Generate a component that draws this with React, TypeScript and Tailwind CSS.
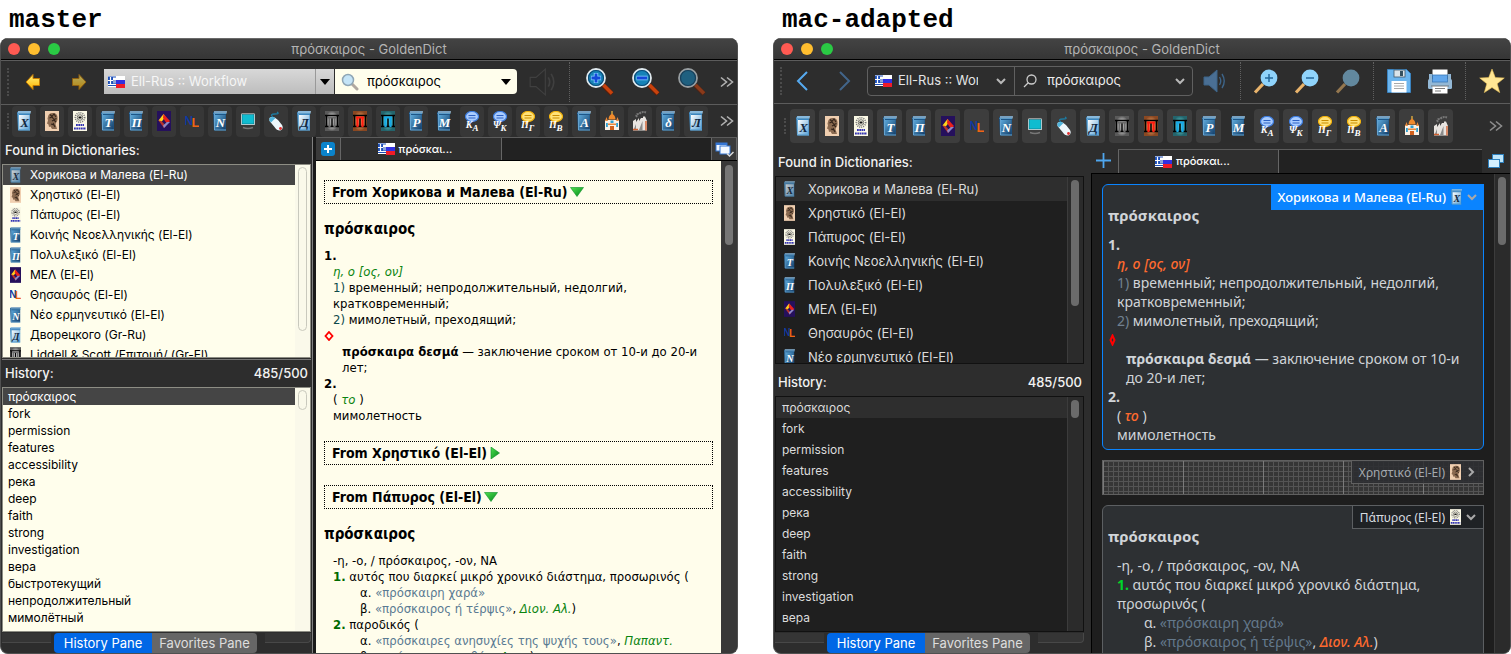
import type { ReactNode } from "react";

/* ---------- Small drawings ---------- */

type GlyphName =
  | "bookX" | "face" | "papyros" | "bookT" | "bookPi" | "mel" | "nl" | "bookN" | "monitor" | "mouse"
  | "bookD" | "colGrey" | "colRed" | "colCyan" | "bookP" | "bookM" | "ka" | "psk" | "pg" | "pb"
  | "bookA" | "church" | "factory" | "bookDelta" | "bookL";

function Defs() {
  return (
    <svg className="absolute size-0" aria-hidden="true">
      <defs>
        <linearGradient id="bookDark" x1="0" y1="0" x2="1" y2="1">
          <stop offset="0" stopColor="#5aa6d8" />
          <stop offset="1" stopColor="#153f69" />
        </linearGradient>
        <linearGradient id="bookLight" x1="0" y1="0" x2="1" y2="1">
          <stop offset="0" stopColor="#ffffff" />
          <stop offset="1" stopColor="#5ba2d6" />
        </linearGradient>
        <radialGradient id="glowGrey"><stop offset="0.2" stopColor="#fff" /><stop offset="1" stopColor="#5a5a5a" /></radialGradient>
        <radialGradient id="glowRed"><stop offset="0.2" stopColor="#ffb070" /><stop offset="1" stopColor="#8a4822" /></radialGradient>
        <radialGradient id="glowCyan"><stop offset="0.2" stopColor="#60e0e0" /><stop offset="1" stopColor="#24646c" /></radialGradient>
        <linearGradient id="gold" x1="0" y1="0" x2="0" y2="1">
          <stop offset="0" stopColor="#fff27a" />
          <stop offset="1" stopColor="#ffb300" />
        </linearGradient>
        <linearGradient id="green" x1="0" y1="0" x2="1" y2="1">
          <stop offset="0" stopColor="#4fe04f" />
          <stop offset="1" stopColor="#05861c" />
        </linearGradient>
      </defs>
    </svg>
  );
}

function Book({ letter, light, dark }: { letter: string; light?: boolean; dark?: boolean }) {
  return (
    <g>
      <path d="M0 1.500 1.500 0H14L13 1.500V19.500H1Z" fill={light ? "#3c86bf" : "#1d5688"} />
      <path d="M1 1h13" stroke="#d4ecfa" strokeWidth="1" />
      <path d="M.5 2.500h13" stroke="#5c9cc8" strokeWidth="1" />
      <rect x="2" y="4" width="10.500" height="14.500" fill={light ? "url(#bookLight)" : "url(#bookDark)"} />
      <path d="M1.500 3v16h11.500" stroke="#77b6e0" fill="none" strokeWidth=".8" />
      <text x="7.500" y="16" textAnchor="middle" fontFamily="Liberation Serif, serif" fontStyle="italic" fontWeight="700" fontSize="13" fill={dark ? "#12283f" : "#fff"}>{letter}</text>
    </g>
  );
}

function Columns({ glow, color }: { glow: string; color: string }) {
  return (
    <g>
      <rect width="14" height="20" fill={`url(#${glow})`} />
      <path d="M0 4.500h14M0 15.500h14" stroke="#000" strokeWidth="1.300" />
      <path d="M1.500 5v10M12.500 5v10M7 7v9" stroke="#000" strokeWidth="1.600" />
      <path d="M3 6.500h8M4.500 7v9M9.500 7v9" stroke={color} strokeWidth="2.200" fill="none" />
    </g>
  );
}

function Bubble({ a, b, gold }: { a: string; b: string; gold?: boolean }) {
  return (
    <g>
      <path d="M4 9v5l5-4z" fill={gold ? "#e9a800" : "#3d7de0"} />
      <ellipse cx="7" cy="5.500" rx="6.500" ry="5" fill={gold ? "#ffe27a" : "#a9ccff"} stroke={gold ? "#f2b20c" : "#3d7de0"} strokeWidth="1.200" />
      <path d="M3.500 4.500h7M3.500 7h7" stroke={gold ? "#c98d00" : "#2e62c4"} strokeWidth="1" />
      <text x="4" y="17" textAnchor="middle" fontFamily="Liberation Serif, serif" fontStyle="italic" fontWeight="700" fontSize="10" fill="#fff">{a}</text>
      <text x="10.500" y="19.500" textAnchor="middle" fontFamily="Liberation Serif, serif" fontStyle="italic" fontWeight="700" fontSize="9" fill="#fff">{b}</text>
    </g>
  );
}

const drawings: Record<GlyphName, ReactNode> = {
  bookX: <Book letter="X" light dark />,
  bookT: <Book letter="T" />,
  bookPi: <Book letter="Π" />,
  bookN: <Book letter="N" />,
  bookD: <Book letter="Д" light dark />,
  bookP: <Book letter="P" />,
  bookM: <Book letter="M" />,
  bookA: <Book letter="A" />,
  bookDelta: <Book letter="δ" />,
  bookL: <Book letter="Л" light dark />,
  face: (
    <g>
      <rect width="14" height="20" fill="#f0cfb0" />
      <path d="M3.500 4Q5 1.500 8 2q4 0 4.500 4 .5 3-1 5l-1 2 1.500 5H7l-1.500-2.500-1.500.5-.5-2.500-1.500-1 1-3-.5-2z" fill="#8a6a50" />
      <path d="M5 3.500l2 2 2-2.500 2 3M4.500 7l2.500-1 2 2.500 2.500-1M7 10l2-1 2 2M6 13l3 1M8 12l2 4" stroke="#33241a" strokeWidth="1.100" fill="none" />
    </g>
  ),
  papyros: (
    <g>
      <rect width="14" height="20" fill="#fbf9e6" />
      <circle cx="7" cy="6.500" r="4.700" fill="none" stroke="#777" strokeWidth="1.600" strokeDasharray="1 1" />
      <circle cx="7" cy="6.500" r="2.800" fill="none" stroke="#555" strokeWidth=".8" />
      <path d="M5.500 6.500h3" stroke="#111" strokeWidth="1.800" />
      <path d="M3 14h8M1 17.500h12" stroke="#3434b4" strokeWidth="2" strokeDasharray="1.800 .5" />
    </g>
  ),
  mel: (
    <g>
      <rect width="14" height="20" fill="#25105c" />
      <path d="M1.500 9.500 6.500 3l2 2.500-4 5.500z" fill="#ffd21c" />
      <path d="M6.500 3 13 10l-3 3-4-6z" fill="#e8201c" />
      <path d="M1.500 9.500 7 17l2-2-4.500-5z" fill="#b8322c" />
      <path d="M7 17l6-6-3 0-4 3.500z" fill="#8d88c8" />
    </g>
  ),
  nl: (
    <g fontFamily="Liberation Sans, sans-serif" fontWeight="700">
      <text x="-1" y="14" fontSize="13" fill="#1338a0">N</text>
      <text x="6.500" y="15.500" fontSize="13" fill="#f06414">L</text>
    </g>
  ),
  monitor: (
    <g>
      <rect x="0" y="2.500" width="14" height="11.500" rx="1" fill="#f2f2f2" />
      <rect x="1" y="3.500" width="12" height="9.500" fill="#10bcd0" stroke="#0a6878" strokeWidth=".6" />
      <path d="M2 16.500q5 2 10 0" stroke="#777" strokeWidth="1.500" fill="none" />
    </g>
  ),
  mouse: (
    <g>
      <path d="M4 6q-4-3 2-3 5 0 2-2" stroke="#1e7aa0" fill="none" strokeWidth="1.300" />
      <path d="M.5 7Q4 4 9 9l4 5q2 4-1.500 5.500Q8 20 5.500 16L.5 10z" fill="#eef7fc" />
      <path d="M.5 7q3-2 6 0L2 11.500l-1.500-2z" fill="#4fb4dc" />
      <circle cx="11.500" cy="17.500" r="1.400" fill="#e03030" />
    </g>
  ),
  colGrey: <Columns glow="glowGrey" color="#6a6a6a" />,
  colRed: <Columns glow="glowRed" color="#ff1a10" />,
  colCyan: <Columns glow="glowCyan" color="#16a8e8" />,
  ka: <Bubble a="K" b="A" />,
  psk: <Bubble a="Ψ" b="K" />,
  pg: <Bubble a="Π" b="Γ" gold />,
  pb: <Bubble a="Π" b="B" gold />,
  church: (
    <g>
      <path d="M0 9h14v10H0z" fill="#fbf1e6" />
      <path d="M7 0v3" stroke="#f6c040" strokeWidth="1.200" />
      <path d="M3.500 8.500q0-4 3.500-6 3.500 2 3.500 6z" fill="#f08a2c" />
      <path d="M0 10l1.500-4L3 10zM11 10l1.500-4L14 10zM3 12.500h8v1.500H3z" fill="#e88a3c" />
      <path d="M1 12h1.800v4H1zM11.200 12H13v4h-1.800zM5.500 9.500h3v2.500h-3z" fill="#2e9fd0" />
      <path d="M5 15h4v4H5z" fill="#d0601c" />
    </g>
  ),
  factory: (
    <g>
      <path d="M4 6q-2-3 2-3 3-3 7-1.500" stroke="#777" strokeWidth="2" fill="none" strokeDasharray="2 .7" />
      <path d="M0 10l3-2v3l3-4v3l2-3h2V5.500h2L14 10v9.500H0z" fill="#e8e4e0" />
      <path d="M.5 19l2.500-6v6zM6 19l3.500-9v9z" fill="#8b8b8b" />
      <path d="M0 18.500h5M13 10v9.500" stroke="#d06030" strokeWidth="1.400" />
    </g>
  ),
};

function Glyph({ name, small, dim }: { name: GlyphName; small?: boolean; dim?: boolean }) {
  const size = small ? "h-4 w-[11px]" : "h-5 w-3.5";
  return (
    <svg viewBox="0 0 14 20" className={`${size} shrink-0 ${dim ? "opacity-75" : ""}`} aria-hidden="true">
      {drawings[name]}
    </svg>
  );
}

function Flags() {
  return (
    <svg viewBox="0 0 17 12" className="h-3 w-[17px] shrink-0" aria-hidden="true">
      <rect width="9" height="11" fill="#fff" />
      <path d="M0 1h9M0 9.500h9M4 5h5M4 7.200h5" stroke="#1c4fb8" strokeWidth="1.200" />
      <rect width="5" height="7" y="1" fill="#1c4fb8" />
      <path d="M2.500 1v7M0 4.500h5" stroke="#fff" strokeWidth="1.200" />
      <rect x="8" width="9" height="4" fill="#fff" />
      <rect x="8" y="4" width="9" height="4" fill="#3131e0" />
      <rect x="8" y="8" width="9" height="4" fill="#f01c28" />
    </svg>
  );
}

function GoldArrow({ flip, dim }: { flip?: boolean; dim?: boolean }) {
  return (
    <svg viewBox="0 0 16 18" className={`h-[18px] w-4 ${flip ? "-scale-x-100" : ""} ${dim ? "opacity-65" : ""}`} aria-hidden="true">
      <path d="M1 9 8 1.500V5.500h6.500v7H8v4z" fill="url(#gold)" stroke="#c47a00" strokeWidth="1" strokeLinejoin="round" />
    </svg>
  );
}

function ClassicLens({ sign, dim }: { sign?: "+" | "-"; dim?: boolean }) {
  return (
    <svg viewBox="0 0 30 30" className={`size-[30px] ${dim ? "opacity-60" : ""}`} aria-hidden="true">
      <path d="M18 18 27 27" stroke="#5a1e08" strokeWidth="5" />
      <path d="M18.500 18 27 26.500" stroke="#c8430e" strokeWidth="3.500" />
      <circle cx="11" cy="11" r="9" fill="#1683b8" stroke="#dfe9ee" strokeWidth="1.800" />
      <circle cx="11" cy="11" r="7.500" fill="none" stroke="#0d4c78" strokeWidth="1.200" />
      {sign && <path d={sign === "+" ? "M6 11h10M11 6v10" : "M5.500 11h11"} stroke="#86d2ff" strokeWidth="4.500" />}
      {sign && <path d={sign === "+" ? "M6.500 11h9M11 6.500v9" : "M6 11h10"} stroke="#1449d8" strokeWidth="2.800" />}
    </svg>
  );
}

function FlatLens({ sign, dim }: { sign?: "+" | "-"; dim?: boolean }) {
  return (
    <svg viewBox="0 0 25 25" className={`size-[25px] ${dim ? "opacity-55" : ""}`} aria-hidden="true">
      <path d="M10 15 2 23.500" stroke="#e9b46c" strokeWidth="3.200" />
      <circle cx="16" cy="9" r="8.400" fill="#8fd3fb" />
      {sign && <path d={sign === "+" ? "M12 9h8M16 5v8" : "M12 9h8"} stroke="#24699c" strokeWidth="1.500" />}
    </svg>
  );
}

function Floppy() {
  return (
    <svg viewBox="0 0 24 24" className="size-6" aria-hidden="true">
      <path d="M.5.5H19.500l4 4v19H.5z" fill="#6cb5ee" stroke="#3a83c0" />
      <rect x="7" y="1" width="11" height="7" fill="#dbe4ea" stroke="#44596a" strokeWidth=".8" />
      <rect x="13" y="2" width="3" height="5" fill="#35505f" />
      <rect x="4.500" y="12" width="15" height="11.500" fill="#fff" />
      <path d="M7 14.500h10M7 17h10M7 19.500h10" stroke="#a9a9a9" />
    </svg>
  );
}

function Printer() {
  return (
    <svg viewBox="0 0 24 25" className="h-[25px] w-6" aria-hidden="true">
      <rect x="0" y="10" width="24" height="10" rx="1.500" fill="#93b8d6" />
      <rect x="1" y="5" width="3" height="6" fill="#93b8d6" />
      <rect x="20" y="5" width="3" height="6" fill="#93b8d6" />
      <rect x="4.500" y=".5" width="15" height="6" fill="#fff" />
      <rect x="4.500" y="6" width="15" height="7" fill="#62a7ec" stroke="#3a79b8" strokeWidth=".8" />
      <rect x="4.500" y="17" width="15" height="7.500" fill="#fff" />
      <path d="M3 17h18M7 19.500h10M7 22h6" stroke="#6d6d6d" strokeWidth=".9" />
    </svg>
  );
}

function Star() {
  return (
    <svg viewBox="0 0 26 26" className="size-[26px]" aria-hidden="true">
      <path d="M13 1l3.300 8.600 9 .4-7.100 5.700 2.500 8.900L13 19.500l-7.700 5.100 2.500-8.900L.7 10l9-.4z" fill="#ffe694" stroke="#e8bf58" strokeWidth=".6" />
    </svg>
  );
}

function Speaker({ className }: { className: string }) {
  return (
    <svg viewBox="0 0 24 24" className={className} aria-hidden="true" fill="none" stroke="currentColor">
      <path d="M1 8h5l8-7v22l-8-7H1z" className="fill-(--cone)" strokeWidth="1" />
      <path d="M16.500 8q2.500 4 0 8M19 5q4.500 7 0 14" strokeWidth="1.400" />
    </svg>
  );
}

function SearchLens() {
  return (
    <svg viewBox="0 0 18 18" className="size-[18px] shrink-0" aria-hidden="true">
      <path d="M11 11l5 5" stroke="#b0a8a0" strokeWidth="3" strokeLinecap="round" />
      <circle cx="7" cy="7" r="5.500" fill="#c4e4f7" stroke="#8fa6b5" strokeWidth="1.500" />
    </svg>
  );
}

function Chevron({ dir = "down", className = "" }: { dir?: "down" | "right"; className?: string }) {
  return (
    <svg viewBox="0 0 10 10" className={`size-2.5 shrink-0 ${className}`} fill="none" stroke="currentColor" strokeWidth="2" aria-hidden="true">
      <path d={dir === "down" ? "M1 3l4 4 4-4" : "M3 1l4 4-4 4"} />
    </svg>
  );
}

function More({ className }: { className: string }) {
  return (
    <button aria-label="More" className={className}>
      <svg viewBox="0 0 14 12" className="h-3 w-3.5" fill="none" stroke="currentColor" strokeWidth="1.600" aria-hidden="true">
        <path d="M1 1.500 6.500 6 1 10.500M7 1.500 12.500 6 7 10.500" />
      </svg>
    </button>
  );
}

function Grip({ className }: { className: string }) {
  return <span className={`w-0 shrink-0 border-l-2 border-dotted border-[#4b4b4b] ${className}`} />;
}

function Triangle({ dir }: { dir: "down" | "right" }) {
  return (
    <svg viewBox="0 0 14 12" className="h-3 w-3.5" aria-hidden="true">
      <path d={dir === "down" ? "M.5 1.500h13L7 10.500z" : "M2 0v12l8.500-6z"} fill="url(#green)" stroke="#0a8f28" strokeWidth=".6" />
    </svg>
  );
}

/* ---------- Data ---------- */

const toolbarGlyphs: GlyphName[] = [
  "bookX", "face", "papyros", "bookT", "bookPi", "mel", "nl", "bookN", "monitor", "mouse", "bookD", "colGrey", "colRed",
  "colCyan", "bookP", "bookM", "ka", "psk", "pg", "pb", "bookA", "church", "factory", "bookDelta", "bookL",
];

const dictionaries: { icon: GlyphName; name: string }[] = [
  { icon: "bookX", name: "Хорикова и Малева (El-Ru)" },
  { icon: "face", name: "Χρηστικό (El-El)" },
  { icon: "papyros", name: "Πάπυρος (El-El)" },
  { icon: "bookT", name: "Κοινής Νεοελληνικής (El-El)" },
  { icon: "bookPi", name: "Πολυλεξικό (El-El)" },
  { icon: "mel", name: "ΜΕΛ (El-El)" },
  { icon: "nl", name: "Θησαυρός (El-El)" },
  { icon: "bookN", name: "Νέο ερμηνευτικό (El-El)" },
  { icon: "bookD", name: "Дворецкого (Gr-Ru)" },
  { icon: "colGrey", name: "Liddell & Scott /Επιτομή/ (Gr-El)" },
];

const history = [
  "πρόσκαιρος", "fork", "permission", "features", "accessibility", "река", "deep", "faith", "strong", "investigation",
  "вера", "быстротекущий", "непродолжительный", "мимолётный",
];

/* ---------- Shared parts ---------- */

function Window({ children }: { children: ReactNode }) {
  return (
    <section className="flex min-h-0 min-w-0 flex-1 flex-col overflow-hidden rounded-lg border-x border-b border-[#505050] bg-[#2d2d2d]">
      <header className="relative flex h-[22px] shrink-0 items-center justify-center border-t border-b border-t-[#6a6a6a] border-b-black bg-linear-to-b from-[#434343] to-[#363636]">
        <div className="absolute left-[7px] flex gap-2">
          <button aria-label="Close" className="size-3 rounded-full bg-[#ff5a52]" />
          <button aria-label="Minimize" className="size-3 rounded-full bg-[#ffbe2f]" />
          <button aria-label="Zoom" className="size-3 rounded-full bg-[#2aca44]" />
        </div>
        <h2 className="text-[13px] leading-5 text-[#b4b4b4]">πρόσκαιρος - GoldenDict</h2>
      </header>
      {children}
    </section>
  );
}

function PaneTabs() {
  return (
    <div className="flex h-[21px] shrink-0 pt-px">
      <span className="mr-[3px] h-2.5 flex-1 border-b border-[#484848] bg-[#353535]" />
      <div className="flex h-5 overflow-hidden rounded text-[13px] leading-5">
        <button className="w-[98px] bg-[#0067e6] text-white">History Pane</button>
        <button className="w-[105px] bg-[#666] text-[#dedede]">Favorites Pane</button>
      </div>
      <span className="ml-2 h-2.5 w-[46px] rounded-br border-r border-b border-[#484848] bg-[#353535]" />
    </div>
  );
}

function PaneTitle({ children, count, className }: { children: ReactNode; count?: string; className: string }) {
  return (
    <div className={`flex shrink-0 items-center justify-between text-[13px] font-medium text-[#f2f2f2] ${className}`}>
      <h3>{children}</h3>
      {count && <span>{count}</span>}
    </div>
  );
}

/* One set of article text, coloured per theme. */
type Theme = { label: string; num: string; item: string; quote: string; mark: ReactNode };

function FirstArticle({ t }: { t: Theme }) {
  return (
    <div>
      <b>1.</b>
      <div className="pl-[9px]">
        <p><i className={t.label}>η, ο [ος, ον]</i></p>
        <p><span className={t.item}>1)</span> временный; непродолжительный, недолгий, кратковременный;</p>
        <p><span className={t.item}>2)</span> мимолетный, преходящий;</p>
      </div>
      {t.mark}
      <p className="pl-[18px]"><b>πρόσκαιρα δεσμά</b> — заключение сроком от 10-и до 20-и лет;</p>
      <b>2.</b>
      <div className="pl-[9px]">
        <p>( <i className={t.label}>το</i> )</p>
        <p>мимолетность</p>
      </div>
    </div>
  );
}

function ThirdArticle({ t }: { t: Theme }) {
  return (
    <div className="pl-[9px]">
      <p>-η, -ο, / πρόσκαιρος, -ον, ΝΑ</p>
      <p><b className={t.num}>1.</b> αυτός που διαρκεί μικρό χρονικό διάστημα, προσωρινός (</p>
      <div className="pl-[27px]">
        <p>α. <span className={t.quote}>«πρόσκαιρη χαρά»</span></p>
        <p>β. <span className={t.quote}>«πρόσκαιρος ή τέρψις»</span>, <i className={t.label}>Διον. Αλ.</i>)</p>
      </div>
      <p><b className={t.num}>2.</b> παροδικός (</p>
      <div className="pl-[27px]">
        <p>α. <span className={t.quote}>«πρόσκαιρες ανησυχίες της ψυχής τους»</span>, <i className={t.label}>Παπαντ.</i></p>
        <p>β. <span className={t.quote}>«πρόσκαιρα αγαθά»</span>, <i className={t.label}>Διον.</i>)</p>
      </div>
    </div>
  );
}

/* ---------- Classic window ---------- */

const classic: Theme = {
  label: "text-[#0a8410]",
  num: "text-[#006a00]",
  item: "text-[#0c4a4a]",
  quote: "text-[#5a7a92]",
  mark: (
    <div className="flex h-4 items-center">
      <svg viewBox="0 0 10 10" className="size-2.5" aria-hidden="true"><path d="M5 1l3.500 4L5 9 1.500 5z" fill="none" stroke="#f00" strokeWidth="1.800" /></svg>
    </div>
  ),
};

function SourceBar({ children, dir, className }: { children: ReactNode; dir: "down" | "right"; className: string }) {
  return (
    <h3 className={`border border-dotted border-black px-[7px] text-[14px] leading-[22px] font-bold ${className}`}>
      <button className="flex items-center gap-0.5">From {children}<Triangle dir={dir} /></button>
    </h3>
  );
}

function ClassicWindow() {
  return (
    <Window>
      <div className="flex h-11 shrink-0 items-center border-t border-[#5c5c5c] pb-0.5 pl-1.5">
        <Grip className="h-7" />
        <button aria-label="Back" className="ml-4"><GoldArrow /></button>
        <button aria-label="Forward" className="ml-[30px]" disabled><GoldArrow flip dim /></button>
        <div className="ml-[17px] flex h-[25px] w-[230px] items-center bg-linear-to-b from-[#d8d8d8] to-[#bdbdbd] pl-1">
          <Flags />
          <select aria-label="Group" className="h-full min-w-0 flex-1 appearance-none pl-1.5 text-[13px] text-[#f6f6f6] outline-none">
            <option>Ell-Rus :: Workflow</option>
          </select>
          <span className="flex h-full w-[19px] items-center justify-center border-l border-[#999]">
            <svg viewBox="0 0 10 6" className="h-1.5 w-2.5" aria-hidden="true"><path d="M0 0h10L5 6z" fill="#000" /></svg>
          </span>
        </div>
        <div className="ml-px flex h-[25px] w-[182px] items-center rounded-r-sm bg-[#fffeec] pl-1.5">
          <SearchLens />
          <input aria-label="Search" defaultValue="πρόσκαιρος" className="ml-2 min-w-0 flex-1 bg-transparent text-[13px] text-black outline-none" />
          <button aria-label="Show matches" className="px-1.5"><svg viewBox="0 0 10 6" className="h-1.5 w-2.5" aria-hidden="true"><path d="M0 0h10L5 6z" fill="#000" /></svg></button>
        </div>
        <button aria-label="Pronounce" disabled className="ml-2.5"><Speaker className="h-7 w-8 text-[#404040] [--cone:#2b2b2b]" /></button>
        <span className="ml-2.5 h-10 border-l border-dotted border-[#606060]" />
        <div className="ml-[15px] flex gap-4">
          <button aria-label="Zoom in"><ClassicLens sign="+" /></button>
          <button aria-label="Zoom out"><ClassicLens sign="-" /></button>
          <button aria-label="Normal size" disabled><ClassicLens dim /></button>
        </div>
        <More className="mr-[3px] ml-auto text-[#b0b0b0]" />
      </div>

      <div className="flex h-[33px] shrink-0 items-center border-t border-[#5c5c5c] pl-1.5">
        <Grip className="mr-[3px] h-4" />
        <div className="flex gap-1">
          {toolbarGlyphs.map((g) => (
            <button key={g} aria-label={g} className={`flex h-[31px] w-6 items-center justify-center rounded-sm ${g === "bookM" ? "" : "bg-[#373737]"}`}>
              <Glyph name={g} />
            </button>
          ))}
        </div>
        <More className="mr-[3px] ml-auto text-[#b0b0b0]" />
      </div>

      <div className="flex min-h-0 flex-1">
        <aside className="flex w-[312px] shrink-0 flex-col border-r border-[#808080] px-px">
          <PaneTitle className="h-[27px] px-[3px]">Found in Dictionaries:</PaneTitle>
          <div className="flex h-[194px] shrink-0 overflow-hidden border border-[#8d8d84] bg-[#fffeec]">
            <ul className="min-w-0 flex-1 text-[12px] text-black">
              {dictionaries.map((d, i) => (
                <li key={d.name} className={`flex h-5 items-center gap-[9px] pl-[7px] leading-5 ${i === 0 ? "bg-[#454545] text-white" : ""}`}>
                  <Glyph name={d.icon} small dim={i === 0} />{d.name}
                </li>
              ))}
            </ul>
            <div className="w-[15px] bg-[#faf9ea] px-[3px] py-0.5"><div className="h-[164px] rounded-full border border-[#c9c9bd]" /></div>
          </div>
          <PaneTitle className="mt-px h-[28px] border-t border-[#777] px-[3px]" count="485/500">History:</PaneTitle>
          <div className="flex min-h-0 flex-1 overflow-hidden border border-[#8d8d84] bg-[#fffeec]">
            <ul className="min-w-0 flex-1 text-[12px] text-black">
              {history.map((h, i) => (
                <li key={h} className={`h-[17px] pl-[5px] leading-[17px] ${i === 0 ? "bg-[#454545] text-white" : ""}`}>{h}</li>
              ))}
            </ul>
            <div className="w-[15px] bg-[#faf9ea] px-[3px] py-0.5"><div className="h-5 rounded-full border border-[#c9c9bd]" /></div>
          </div>
          <PaneTabs />
        </aside>

        <main className="flex min-w-0 flex-1 flex-col border-l-[3px] border-[#1a1a1a]">
          <div className="flex h-6 shrink-0 border-t border-b border-t-[#5c5c5c] border-b-black bg-[#222]">
            <button aria-label="New tab" className="flex w-[25px] items-center justify-center border-r border-[#666] bg-[#3a3a3a]">
              <svg viewBox="0 0 14 14" className="size-3.5" aria-hidden="true"><rect width="14" height="14" rx="3" fill="#0b84cc" /><path d="M7 3v8M3 7h8" stroke="#fff" strokeWidth="2" /></svg>
            </button>
            <button className="flex w-[161px] items-center justify-center gap-1 border-r border-[#666] bg-[#2f2f2f] pr-3 text-[11px] font-medium text-white"><Flags />πρόσκαι...</button>
            <button aria-label="Tab list" className="ml-auto flex w-[26px] items-center justify-center border-x border-[#666] bg-[#3a3a3a]">
              <svg viewBox="0 0 20 17" className="h-[17px] w-5" aria-hidden="true">
                <rect x="2" y="2" width="11" height="8" fill="#f4f9ff" stroke="#3576d4" /><path d="M2 3h11" stroke="#3576d4" strokeWidth="2" />
                <rect x="6" y="5" width="10" height="8" fill="#f4f9ff" stroke="#3576d4" /><path d="M13 12.500l2.500 2.500 4-4" stroke="#ddd" strokeWidth="1.500" fill="none" />
              </svg>
            </button>
          </div>
          <div className="flex min-h-0 flex-1">
            <article className="min-w-0 flex-1 overflow-hidden bg-[#fffdeb] pt-[19px] pr-2 pl-2 font-['DejaVu_Sans_Condensed','Noto_Sans',sans-serif] text-[13px] leading-4 text-black">
              <SourceBar dir="down" className="">Хорикова и Малева (El-Ru)</SourceBar>
              <h4 className="mt-[17px] mb-[11px] text-[15px] leading-4 font-bold">πρόσκαιρος</h4>
              <FirstArticle t={classic} />
              <SourceBar dir="right" className="mt-[17px]">Χρηστικό (El-El)</SourceBar>
              <SourceBar dir="down" className="mt-5">Πάπυρος (El-El)</SourceBar>
              <h4 className="mt-[17px] mb-[11px] text-[15px] leading-4 font-bold">πρόσκαιρος</h4>
              <ThirdArticle t={classic} />
            </article>
            <div className="w-4 bg-[#383838] px-1 pt-1"><div className="h-20 rounded-full bg-[#767676]" /></div>
          </div>
        </main>
      </div>
    </Window>
  );
}

/* ---------- Mac window ---------- */

const mac: Theme = {
  label: "text-[#ff6a2e] font-medium",
  num: "text-[#00d42a]",
  item: "text-[#718090]",
  quote: "text-[#64798c]",
  mark: (
    <div className="flex h-[19px] items-center">
      <svg viewBox="0 0 9 12" className="h-3 w-[9px]" aria-hidden="true"><path d="M4.500 1.500l2 4.500-2 4.500-2-4.500z" fill="none" stroke="#f00" strokeWidth="2" /></svg>
    </div>
  ),
};

function Separator({ className }: { className: string }) {
  return <span className={`h-[38px] shrink-0 border-l border-dotted border-[#606060] ${className}`} />;
}

function CardTag({ children, icon, dir, className }: { children: ReactNode; icon: GlyphName; dir: "down" | "right"; className: string }) {
  return (
    <button className={`absolute -top-px -right-px flex items-center gap-[5px] px-[7px] ${className}`}>
      {children}
      <Glyph name={icon} small />
      <Chevron dir={dir} className="text-[#a9a9a9]" />
    </button>
  );
}

function MacWindow() {
  return (
    <Window>
      <div className="flex h-[43px] shrink-0 items-center border-t border-[#5c5c5c] pb-0.5 pl-1.5">
        <Grip className="h-7" />
        <button aria-label="Back" className="ml-3.5"><svg viewBox="0 0 12 20" className="h-5 w-3" fill="none" stroke="#56aaf0" strokeWidth="2" aria-hidden="true"><path d="M11 1 2 10l9 9" /></svg></button>
        <button aria-label="Forward" disabled className="ml-[31px]"><svg viewBox="0 0 12 20" className="h-5 w-3" fill="none" stroke="#42658a" strokeWidth="2" aria-hidden="true"><path d="M1 1l9 9-9 9" /></svg></button>
        <div className="ml-4 flex h-[30px] w-[326px] items-center rounded border border-[#606060]">
          <div className="flex h-full w-[147px] items-center border-r border-[#606060] pl-[7px]">
            <Flags />
            <select aria-label="Group" className="mr-[18px] ml-1.5 h-full w-20 min-w-0 appearance-none overflow-hidden text-[13px] text-[#e4e4e4] outline-none">
              <option>Ell-Rus :: Workflow</option>
            </select>
            <Chevron className="text-[#b8b8b8]" />
          </div>
          <svg viewBox="0 0 14 14" className="ml-2 size-3.5 shrink-0" fill="none" stroke="#ccc" strokeWidth="1.300" aria-hidden="true"><circle cx="8.500" cy="5.500" r="4.500" /><path d="M5.500 8.500 1 13" /></svg>
          <input aria-label="Search" defaultValue="πρόσκαιρος" className="ml-2.5 min-w-0 flex-1 bg-transparent text-[13px] text-[#ececec] outline-none" />
          <button aria-label="Show matches" className="mr-[7px]"><Chevron className="text-[#b8b8b8]" /></button>
        </div>
        <button aria-label="Pronounce" disabled className="ml-2.5"><Speaker className="size-6 text-[#3d6488] [--cone:#4a6f94]" /></button>
        <Separator className="ml-[13px]" />
        <div className="ml-3 flex gap-4">
          <button aria-label="Zoom in"><FlatLens sign="+" /></button>
          <button aria-label="Zoom out"><FlatLens sign="-" /></button>
          <button aria-label="Normal size" disabled><FlatLens dim /></button>
        </div>
        <Separator className="ml-[13px]" />
        <button aria-label="Save" className="ml-[13px]"><Floppy /></button>
        <button aria-label="Print" className="ml-[17px]"><Printer /></button>
        <Separator className="ml-[13px]" />
        <button aria-label="Favorites" className="ml-[13px]"><Star /></button>
      </div>

      <div className="flex h-[45px] shrink-0 items-center border-t border-[#5c5c5c] pl-2.5">
        <Grip className="mr-1 h-4" />
        <div className="flex gap-1">
          {toolbarGlyphs.slice(0, 23).map((g) => (
            <button key={g} aria-label={g} className={`flex h-[34px] w-[25px] items-center justify-center rounded-sm ${g === "bookM" ? "" : "bg-[#3d3d3d]"}`}>
              <Glyph name={g} />
            </button>
          ))}
        </div>
        <More className="mr-[7px] ml-auto text-[#8c8c8c]" />
      </div>

      <div className="flex min-h-0 flex-1">
        <aside className="flex w-[317px] shrink-0 flex-col pr-[7px] pl-px">
          <PaneTitle className="h-7 px-[3px] pt-0.5">Found in Dictionaries:</PaneTitle>
          <div className="flex h-[188px] shrink-0 overflow-hidden border border-[#111] bg-[#1f1f1f]">
            <ul className="min-w-0 flex-1 text-[13px] text-[#dcdcdc]">
              {dictionaries.slice(0, 8).map((d, i) => (
                <li key={d.name} className={`flex h-6 items-center gap-[13px] pl-2 leading-6 ${i === 0 ? "bg-[#2e2e2e]" : ""}`}>
                  <Glyph name={d.icon} small dim={i === 0} />{d.name}
                </li>
              ))}
            </ul>
            <div className="w-4 border-l border-[#3c3c3c] bg-[#2b2b2b] px-[3px] py-[3px]"><div className="h-[126px] w-2 rounded-full bg-[#6b6b6b]" /></div>
          </div>
          <PaneTitle className="h-8 pt-1.5 pr-0.5 pl-[3px]" count="485/500">History:</PaneTitle>
          <div className="flex min-h-0 flex-1 overflow-hidden border border-[#111] bg-[#1f1f1f]">
            <ul className="min-w-0 flex-1 text-[12px] text-[#dcdcdc]">
              {history.slice(0, 11).map((h, i) => (
                <li key={h} className={`h-[21px] pl-1.5 leading-[21px] ${i === 0 ? "bg-[#2e2e2e]" : ""}`}>{h}</li>
              ))}
            </ul>
            <div className="w-4 border-l border-[#3c3c3c] bg-[#2b2b2b] px-[3px] py-[3px]"><div className="h-[18px] w-2 rounded-full bg-[#6b6b6b]" /></div>
          </div>
          <PaneTabs />
        </aside>

        <main className="flex min-w-0 flex-1 flex-col">
          <div className="flex h-[25px] shrink-0">
            <button aria-label="New tab" className="flex w-[27px] items-center pl-[5px]">
              <svg viewBox="0 0 15 15" className="size-[15px]" aria-hidden="true"><path d="M7.500 0v15M0 7.500h15" stroke="#4fa6ee" strokeWidth="1.800" /></svg>
            </button>
            <div className="mt-px flex flex-1 border-t border-[#5c5c5c] bg-[#222]">
              <button className="flex w-[161px] items-center justify-center gap-1 border-x border-[#666] bg-[#2f2f2f] pr-3 text-[11px] font-medium text-white"><Flags />πρόσκαι...</button>
            </div>
            <button aria-label="Tab list" className="flex w-7 items-center justify-center">
              <svg viewBox="0 0 16 14" className="h-3.5 w-4" aria-hidden="true">
                <rect x="4.500" y=".5" width="11" height="8" fill="#bfe6fb" stroke="#2e80bd" /><rect x=".5" y="5.500" width="11" height="8" fill="#d4f0ff" stroke="#2e80bd" />
              </svg>
            </button>
          </div>
          <div className="flex min-h-0 flex-1 border-t border-l border-black">
            <div className="flex min-w-0 flex-1 flex-col gap-2.5 overflow-hidden bg-[#1e1e1e] px-2.5 pt-2.5 font-['Noto_Sans',sans-serif] text-[14px] leading-[19px] text-[#d0d4d8]">
              <article className="relative shrink-0 rounded-md rounded-tr-none border border-[#0a84ff] bg-[#2d3033] pt-5 pr-2 pb-[5px] pl-[5px]">
                <CardTag icon="bookX" dir="down" className="h-[26px] bg-[#0a84ff] text-[13px] font-medium text-white">Хорикова и Малева (El-Ru)</CardTag>
                <h4 className="mb-2.5 text-[15px] leading-5 font-bold">πρόσκαιρος</h4>
                <FirstArticle t={mac} />
              </article>
              <article className="relative h-[35px] shrink-0 border border-[#606060] bg-[#363636] bg-[linear-gradient(90deg,#7a7a7a_1px,transparent_1px),linear-gradient(#545454_1px,transparent_1px),linear-gradient(90deg,#545454_1px,transparent_1px)] bg-[size:80px_80px,5px_5px,5px_5px]">
                <CardTag icon="face" dir="right" className="h-6 border border-[#606060] bg-[#2b2d30]/85 text-[12px] text-[#a4a9ae]">Χρηστικό (El-El)</CardTag>
              </article>
              <article className="relative shrink-0 rounded-md rounded-tr-none border border-[#5c5f62] bg-[#2d3033] pt-5 pr-2 pb-[5px] pl-[5px]">
                <CardTag icon="papyros" dir="down" className="h-6 border border-[#5c5f62] bg-[#1f2225] text-[12px] text-[#d8dce0]">Πάπυρος (El-El)</CardTag>
                <h4 className="mb-2.5 text-[15px] leading-5 font-bold">πρόσκαιρος</h4>
                <ThirdArticle t={mac} />
              </article>
            </div>
            <div className="w-4 border-l border-[#3c3c3c] bg-[#2b2b2b] px-[3px] pt-[3px]"><div className="h-[68px] w-2 rounded-full bg-[#6b6b6b]" /></div>
          </div>
        </main>
      </div>
    </Window>
  );
}

export default function App() {
  return (
    <div className="flex h-screen min-w-[1200px] gap-[35px] overflow-hidden bg-white font-['Inter','Noto_Sans',sans-serif]">
      <Defs />
      <div className="flex min-w-0 flex-1 flex-col">
        <h1 className="h-[38px] shrink-0 pl-[9px] font-['Liberation_Mono',monospace] text-[26px] leading-10 font-bold text-black">master</h1>
        <ClassicWindow />
      </div>
      <div className="flex min-w-0 flex-1 flex-col">
        <h1 className="h-[38px] shrink-0 pl-[9px] font-['Liberation_Mono',monospace] text-[26px] leading-10 font-bold text-black">mac-adapted</h1>
        <MacWindow />
      </div>
    </div>
  );
}
